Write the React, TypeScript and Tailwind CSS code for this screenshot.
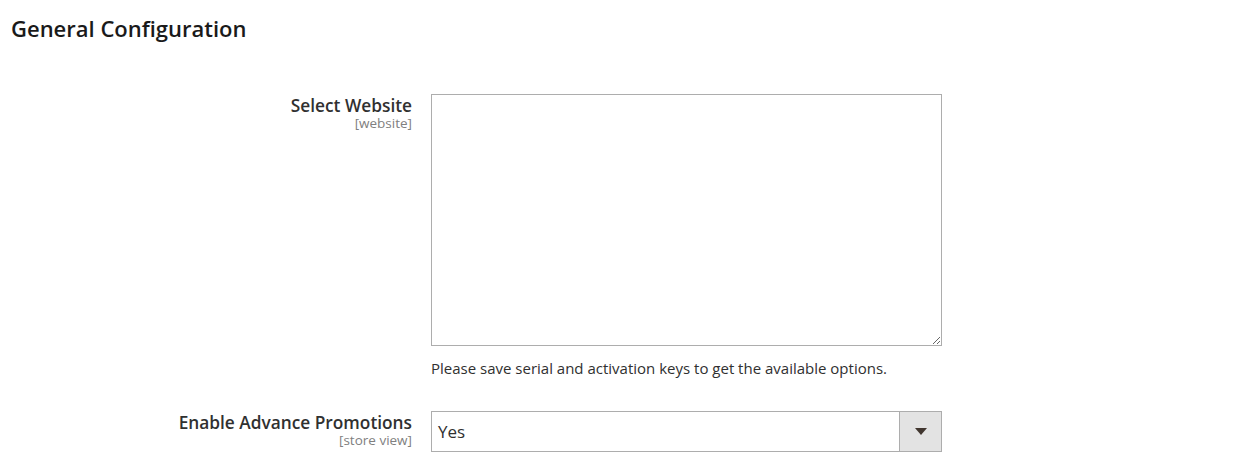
const font = { fontFamily: '"Open Sans", "Noto Sans", sans-serif' };

function FieldLabel({ title, scope }: { title: string; scope: string }) {
    return (
        <div className="w-[412px] shrink-0 flex flex-col items-end pt-[2px]">
            <span className="text-[17.3px] font-semibold leading-[20px] text-[#303030]">{title}</span>
            <span className="text-[13.5px] leading-[14px] text-[#808080]">{scope}</span>
        </div>
    );
}

export default function App() {
    return (
        <div className="w-[1240px] h-[475px] bg-white" style={font}>
            <div className="pl-[11px] pt-[13px]">
                <h2 className="text-[22px] font-semibold leading-[30px] text-[#1a1a1a]">General Configuration</h2>
            </div>
            <div className="mt-[51px] flex flex-col">
                {/* website selector */}
                <div className="flex gap-[19px]">
                    <FieldLabel title="Select Website" scope="[website]" />
                    <div className="flex flex-col">
                        <textarea className="w-[511px] h-[252px] border border-[#adadad] bg-white resize block outline-none" />
                        <p className="mt-[12px] text-[15px] leading-[20px] text-[#303030]">
                            Please save serial and activation keys to get the available options.
                        </p>
                    </div>
                </div>
                {/* promotions */}
                <div className="flex gap-[19px] mt-[33px]">
                    <FieldLabel title="Enable Advance Promotions" scope="[store view]" />
                    <div className="w-[511px] h-[41px] border border-[#adadad] flex">
                        <span className="flex-1 flex items-center pl-[6px] text-[17px] text-[#303030]">Yes</span>
                        <span className="w-[42px] bg-[#e3e3e3] border-l border-[#adadad] flex items-center justify-center">
                            <svg width="12" height="7" viewBox="0 0 12 7">
                                <path d="M0 0h12L6 7z" fill="#41362f" />
                            </svg>
                        </span>
                    </div>
                </div>
            </div>
        </div>
    );
}
